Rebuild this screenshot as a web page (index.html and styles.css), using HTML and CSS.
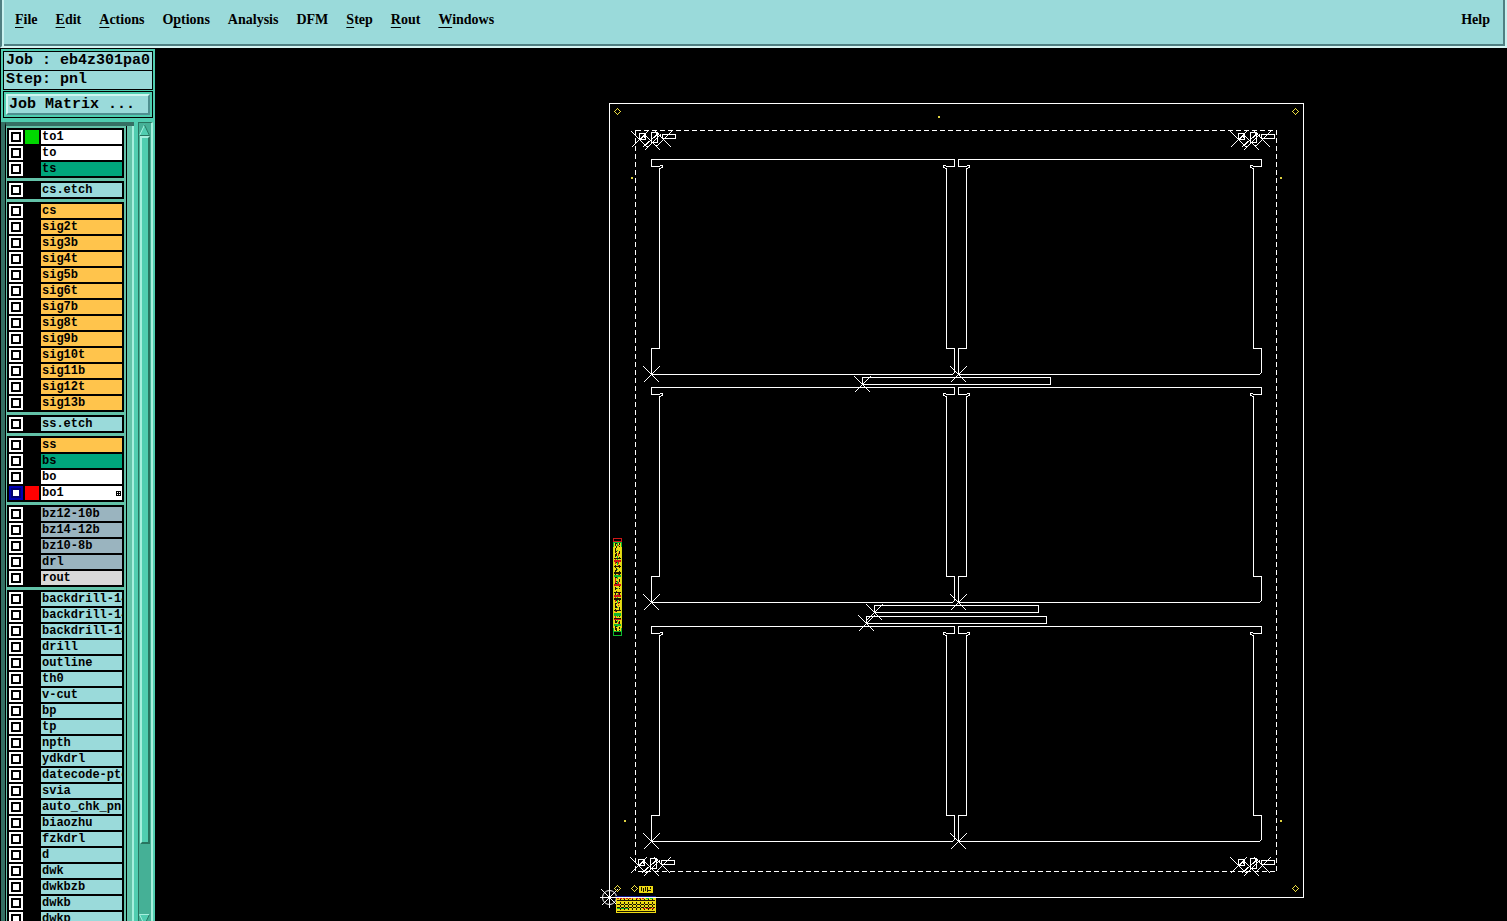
FILE: index.html
```
<!DOCTYPE html>
<html lang="en">
<head>
<meta charset="utf-8">
<title>Job eb4z301pa0</title>
<link rel="stylesheet" href="styles.css">
</head>
<body>
<header class="menubar">
  <nav class="menus">
    <button class="menu"><u>F</u>ile</button>
    <button class="menu"><u>E</u>dit</button>
    <button class="menu"><u>A</u>ctions</button>
    <button class="menu">O<u>p</u>tions</button>
    <button class="menu">Analysis</button>
    <button class="menu">DFM</button>
    <button class="menu"><u>S</u>tep</button>
    <button class="menu"><u>R</u>out</button>
    <button class="menu"><u>W</u>indows</button>
  </nav>
  <button class="menu">Help</button>
</header>
<main class="workspace">
  <aside class="sidebar">
    <div class="info">
      <div class="info-line">Job : eb4z301pa0</div>
      <div class="info-line">Step: pnl</div>
    </div>
    <div class="matrix"><button class="matrix-button">Job Matrix ...</button></div>
    <div class="browser">
      <div class="layers">
        <ul class="group">
          <li><label class="layer silk"><input type="checkbox"><i class="swatch green"></i><span class="name">to1</span></label></li>
          <li><label class="layer silk"><input type="checkbox"><i class="swatch"></i><span class="name">to</span></label></li>
          <li><label class="layer mask"><input type="checkbox"><i class="swatch"></i><span class="name">ts</span></label></li>
        </ul>
        <ul class="group">
          <li><label class="layer"><input type="checkbox"><i class="swatch"></i><span class="name">cs.etch</span></label></li>
        </ul>
        <ul class="group">
          <li><label class="layer signal"><input type="checkbox"><i class="swatch"></i><span class="name">cs</span></label></li>
          <li><label class="layer signal"><input type="checkbox"><i class="swatch"></i><span class="name">sig2t</span></label></li>
          <li><label class="layer signal"><input type="checkbox"><i class="swatch"></i><span class="name">sig3b</span></label></li>
          <li><label class="layer signal"><input type="checkbox"><i class="swatch"></i><span class="name">sig4t</span></label></li>
          <li><label class="layer signal"><input type="checkbox"><i class="swatch"></i><span class="name">sig5b</span></label></li>
          <li><label class="layer signal"><input type="checkbox"><i class="swatch"></i><span class="name">sig6t</span></label></li>
          <li><label class="layer signal"><input type="checkbox"><i class="swatch"></i><span class="name">sig7b</span></label></li>
          <li><label class="layer signal"><input type="checkbox"><i class="swatch"></i><span class="name">sig8t</span></label></li>
          <li><label class="layer signal"><input type="checkbox"><i class="swatch"></i><span class="name">sig9b</span></label></li>
          <li><label class="layer signal"><input type="checkbox"><i class="swatch"></i><span class="name">sig10t</span></label></li>
          <li><label class="layer signal"><input type="checkbox"><i class="swatch"></i><span class="name">sig11b</span></label></li>
          <li><label class="layer signal"><input type="checkbox"><i class="swatch"></i><span class="name">sig12t</span></label></li>
          <li><label class="layer signal"><input type="checkbox"><i class="swatch"></i><span class="name">sig13b</span></label></li>
        </ul>
        <ul class="group">
          <li><label class="layer"><input type="checkbox"><i class="swatch"></i><span class="name">ss.etch</span></label></li>
        </ul>
        <ul class="group">
          <li><label class="layer signal"><input type="checkbox"><i class="swatch"></i><span class="name">ss</span></label></li>
          <li><label class="layer mask"><input type="checkbox"><i class="swatch"></i><span class="name">bs</span></label></li>
          <li><label class="layer silk"><input type="checkbox"><i class="swatch"></i><span class="name">bo</span></label></li>
          <li><label class="layer silk"><input type="checkbox" checked><i class="swatch red"></i><span class="name">bo1<svg class="grid-mark" viewBox="0 0 5 5" aria-hidden="true"><path d="M0 .5H5M0 2.5H5M0 4.5H5M.5 0V5M2.5 0V5M4.5 0V5"/></svg></span></label></li>
        </ul>
        <ul class="group">
          <li><label class="layer drill"><input type="checkbox"><i class="swatch"></i><span class="name">bz12-10b</span></label></li>
          <li><label class="layer drill"><input type="checkbox"><i class="swatch"></i><span class="name">bz14-12b</span></label></li>
          <li><label class="layer drill"><input type="checkbox"><i class="swatch"></i><span class="name">bz10-8b</span></label></li>
          <li><label class="layer drill"><input type="checkbox"><i class="swatch"></i><span class="name">drl</span></label></li>
          <li><label class="layer rout"><input type="checkbox"><i class="swatch"></i><span class="name">rout</span></label></li>
        </ul>
        <ul class="group">
          <li><label class="layer"><input type="checkbox"><i class="swatch"></i><span class="name">backdrill-14</span></label></li>
          <li><label class="layer"><input type="checkbox"><i class="swatch"></i><span class="name">backdrill-14</span></label></li>
          <li><label class="layer"><input type="checkbox"><i class="swatch"></i><span class="name">backdrill-14</span></label></li>
          <li><label class="layer"><input type="checkbox"><i class="swatch"></i><span class="name">drill</span></label></li>
          <li><label class="layer"><input type="checkbox"><i class="swatch"></i><span class="name">outline</span></label></li>
          <li><label class="layer"><input type="checkbox"><i class="swatch"></i><span class="name">th0</span></label></li>
          <li><label class="layer"><input type="checkbox"><i class="swatch"></i><span class="name">v-cut</span></label></li>
          <li><label class="layer"><input type="checkbox"><i class="swatch"></i><span class="name">bp</span></label></li>
          <li><label class="layer"><input type="checkbox"><i class="swatch"></i><span class="name">tp</span></label></li>
          <li><label class="layer"><input type="checkbox"><i class="swatch"></i><span class="name">npth</span></label></li>
          <li><label class="layer"><input type="checkbox"><i class="swatch"></i><span class="name">ydkdrl</span></label></li>
          <li><label class="layer"><input type="checkbox"><i class="swatch"></i><span class="name">datecode-pto</span></label></li>
          <li><label class="layer"><input type="checkbox"><i class="swatch"></i><span class="name">svia</span></label></li>
          <li><label class="layer"><input type="checkbox"><i class="swatch"></i><span class="name">auto_chk_pnl</span></label></li>
          <li><label class="layer"><input type="checkbox"><i class="swatch"></i><span class="name">biaozhu</span></label></li>
          <li><label class="layer"><input type="checkbox"><i class="swatch"></i><span class="name">fzkdrl</span></label></li>
          <li><label class="layer"><input type="checkbox"><i class="swatch"></i><span class="name">d</span></label></li>
          <li><label class="layer"><input type="checkbox"><i class="swatch"></i><span class="name">dwk</span></label></li>
          <li><label class="layer"><input type="checkbox"><i class="swatch"></i><span class="name">dwkbzb</span></label></li>
          <li><label class="layer"><input type="checkbox"><i class="swatch"></i><span class="name">dwkb</span></label></li>
          <li><label class="layer"><input type="checkbox"><i class="swatch"></i><span class="name">dwkp</span></label></li>
        </ul>
      </div>
      <div class="scrollbar">
        <button class="arrow" aria-label="Scroll up"><svg viewBox="0 0 11 12" aria-hidden="true"><path class="face" d="M0 12L5.500 0L11 12Z"/><path class="lit" d="M.5 11.500L5.500 1"/><path class="shade" d="M5.500 1L10.500 11.500H.5"/></svg></button>
        <div class="trough"><div class="thumb"></div></div>
        <button class="arrow" aria-label="Scroll down"><svg viewBox="0 0 11 12" aria-hidden="true"><path class="face" d="M0 0H11L5.500 12Z"/><path class="lit" d="M5.500 11L.5 .5H10.500"/><path class="shade" d="M10.500 .5L5.500 11"/></svg></button>
      </div>
    </div>
  </aside>
  <svg class="board" viewBox="155 48 1352 873" role="img" aria-label="Panel drawing">
    <defs>
      <path id="cross" d="M-8 -8L8 8M-8 8L8 -8"/>
      <path id="diamond" d="M-3 0L0 -3L3 0L0 3Z"/>
      <path id="unit" d="M651 159H954V166H946L945 165H943V167L946 168V348H954V372L952 374H651V348H659V168L662 167V165H660L659 166H651Z"/>
      <g id="fiducial">
        <use href="#cross" x="639" y="139"/>
        <use href="#cross" x="652" y="142"/>
        <use href="#cross" x="663" y="139"/>
        <path d="M639 133H645V139H639ZM651 132H657V142H651ZM662 134H675V138H662ZM640 139L645 134M643 146L659 132M655 132L661 136"/>
        <path d="M646 146H648M654 145H656M658 135H660M644 135V137"/>
      </g>
    </defs>
    <g class="lines" transform="translate(.5 .5)">
      <rect x="609" y="103" width="694" height="794"/>
      <rect class="dashed" x="635" y="130" width="641" height="741"/>
      <use href="#unit"/><use href="#unit" x="307"/>
      <use href="#unit" y="228"/><use href="#unit" x="307" y="228"/>
      <use href="#unit" y="467"/><use href="#unit" x="307" y="467"/>
      <use href="#cross" x="651" y="374"/><use href="#cross" x="958" y="374"/>
      <use href="#cross" x="651" y="602"/><use href="#cross" x="958" y="602"/>
      <use href="#cross" x="651" y="841"/><use href="#cross" x="958" y="841"/>
      <rect x="862" y="377" width="188" height="7"/><use href="#cross" x="862" y="384"/>
      <rect x="874" y="605" width="164" height="7"/><use href="#cross" x="874" y="612"/>
      <rect x="866" y="616" width="180" height="7"/><use href="#cross" x="866" y="623"/>
      <use href="#fiducial"/><use href="#fiducial" x="599"/>
      <use href="#fiducial" x="-1" y="726"/><use href="#fiducial" x="599" y="726"/>
      <circle cx="609" cy="897" r="7"/><use href="#cross" x="609" y="897"/>
      <path d="M599 897H619M609 888V907"/>
    </g>
    <g class="marks" transform="translate(.5 .5)">
      <use href="#diamond" x="617" y="111"/><use href="#diamond" x="1295" y="111"/>
      <use href="#diamond" x="617" y="888"/><use href="#diamond" x="1295" y="888"/>
      <use href="#diamond" x="634" y="888"/><path d="M630 888H631M634 884V885"/>
    </g>
    <path class="dots" d="M938 116h2v2h-2zM631 177h2v2h-2zM1280 177h2v2h-2zM624 820h2v2h-2zM1280 820h2v2h-2z"/>
    <g class="coupon">
      <rect class="fill-yellow" x="614" y="542" width="7" height="89"/>
      <path class="ink-black" d="M615.500 543V631" stroke-dasharray="3 2 5 1"/>
      <path class="ink-black" d="M616.500 543V631" stroke-dasharray="1 2 2 3 1 1 3 2"/>
      <path class="ink-green" d="M617.500 543V631" stroke-dasharray="3 4 1 5 4 2"/>
      <path class="ink-red" d="M618.500 545V631" stroke-dasharray="1 7 3 6 2 1"/>
      <path class="ink-black" d="M619.500 543V631" stroke-dasharray="2 1 1 4 3 3"/>
      <path class="ink-red" d="M615.500 559V620" stroke-dasharray="5 9 1 4"/>
      <path class="ink-black wide" d="M617.500 558V628" stroke-dasharray="1 7 1 5 2 10"/>
      <path class="ink-red wide" d="M617.500 560V620" stroke-dasharray="2 22 2 9"/>
      <path class="ink-green wide" d="M617.500 575V627" stroke-dasharray="2 36 3 8"/>
      <path class="fill-black" d="M614 539H621V541H614ZM614 632H621V635H614Z"/>
      <path class="ink-red" d="M613.500 542V538.500H621.500V542M614 541.500H621"/>
      <path class="ink-green" d="M613.500 542V635.500H621.500V542M614 542.500H621M614 631.500H621"/>
      <path class="ink-yellow" d="M613.500 547V628M621.500 547V628"/>
    </g>
    <g class="coupon">
      <rect class="fill-yellow" x="639" y="886" width="14" height="7"/>
      <path class="ink-black" d="M641.500 887V891M643.500 888V892M645.500 887V891M647.500 887V892M650.500 887V889M648 890.500H651"/>
      <rect class="fill-yellow" x="616" y="898" width="40" height="15"/>
      <path class="ink-black" d="M617 900.500H655M617 904.500H655M617 907.500H655M617 911.500H655" stroke-dasharray="3 1"/>
      <path class="ink-black" d="M620.500 899V912M624.500 899V912M628.500 899V912M632.500 899V912M636.500 899V912M640.500 899V912M644.500 899V912M648.500 899V912M652.500 899V912" stroke-dasharray="2 1"/>
      <path class="ink-red" d="M617 898.500H633M643 908.500H655M636 898.500H645" stroke-dasharray="2 1"/>
      <path class="ink-green" d="M617 908.500H629M646 898.500H653" stroke-dasharray="3 1"/>
      <path class="ink-blue" d="M616 896.500H656"/>
    </g>
  </svg>
</main>
</body>
</html>
```
FILE: styles.css
```
* { box-sizing: border-box; }

body {
  margin: 0;
  height: 100vh;
  display: flex;
  flex-direction: column;
  overflow: hidden;
  background: #000;
  color: #000;
}

button {
  margin: 0;
  padding: 0;
  border: 0;
  background: none;
  color: inherit;
}

.menubar {
  flex: none;
  display: flex;
  justify-content: space-between;
  align-items: flex-start;
  padding: 10px 15px 17px 11px;
  background: #9adada;
  border-left: 2px solid #4f7f82;
  border-right: 2px solid #c9f2f0;
  border-bottom: 2px solid #d5f5f3;
  box-shadow: inset 2px 0 #c9f2f0, inset -2px -2px #4f7f82;
}
.menus { display: flex; gap: 18px; padding-left: 2px; }
.menu {
  font: bold 14px/19px "Liberation Serif", serif;
}
.menu u {
  text-underline-offset: 3px;
  text-decoration-thickness: 1px;
  text-decoration-skip-ink: none;
}

.workspace {
  flex: 1;
  min-height: 0;
  display: flex;
}

.sidebar {
  flex: none;
  width: 155px;
  display: flex;
  flex-direction: column;
  overflow: hidden;
  background: #50cdb0;
  border-left: 1px solid #000;
  border-top: 1px solid #000;
  font: bold 15px/18px "Liberation Mono", monospace;
}
.info {
  margin: 2px 2px 1px 2px;
  border: 1px solid #000;
  background: #9adada;
}
.info-line { padding-left: 2px; white-space: nowrap; }
.info-line + .info-line { border-top: 1px solid #000; }
.matrix {
  margin: 0 2px;
  padding: 2px;
  border: 1px solid #000;
  background: #50cdb0;
}
.matrix-button {
  display: block;
  width: 100%;
  padding-left: 1px;
  border: 2px solid;
  border-color: #d0f5f0 #4f8f90 #4f8f90 #d0f5f0;
  background: #9adada;
  font: inherit;
  line-height: 17px;
  text-align: left;
}

.browser {
  flex: 1;
  min-height: 0;
  display: flex;
  margin-top: 4px;
  border-left: 4px solid #357064;
}
.layers {
  width: 129px;
  overflow: hidden;
  display: flex;
  flex-direction: column;
  gap: 3px;
  padding: 2px 10px 0 1px;
  background: linear-gradient(#000 0 0) 120px 0 / 1px 100% no-repeat, linear-gradient(#a5efdd 0 0) 126px 0 / 2px 100% no-repeat, #63c2a8;
  border-top: 4px solid #357064;
  border-left: 1px solid #000;
}
.group {
  flex: none;
  margin: 0;
  padding: 2px;
  display: grid;
  grid-template-columns: minmax(0, 1fr);
  gap: 2px;
  background: #000;
  list-style: none;
}
.layer { display: flex; gap: 2px; height: 14px; }
.layer input {
  appearance: none;
  flex: none;
  width: 14px;
  height: 14px;
  margin: 0;
  border: 2px solid #fff;
  background: #fff;
  box-shadow: inset 0 0 0 2px #000;
}
.layer input:checked { border-color: #0000b4; box-shadow: inset 0 0 0 2px #000070; }
.swatch { flex: none; width: 14px; height: 14px; background: #000; }
.green { background: #00d800; }
.red { background: #f00; }
.name {
  flex: 1;
  min-width: 0;
  display: flex;
  justify-content: space-between;
  align-items: center;
  padding-left: 1px;
  overflow: hidden;
  white-space: nowrap;
  background: #9adada;
  font-size: 12px;
  line-height: 14px;
}
.silk .name { background: #fff; }
.mask .name { background: #00a67c; }
.signal .name { background: #ffc44c; }
.drill .name { background: #9ab4bf; }
.rout .name { background: #d9d9d9; }
.grid-mark {
  width: 5px;
  height: 5px;
  margin-right: 1px;
  stroke: #000;
  fill: none;
  stroke-width: 1px;
  shape-rendering: crispEdges;
}

.scrollbar {
  width: 15px;
  margin-left: 4px;
  display: flex;
  flex-direction: column;
  align-items: stretch;
  background: #45b096;
  border: 1px solid #287560;
  border-bottom: 0;
  border-right: 2px solid #a5efdd;
}
.arrow { flex: none; height: 13px; }
.arrow:last-child { height: 7px; overflow: hidden; }
.arrow svg { display: block; width: 11px; height: 12px; }
.arrow path { fill: none; }
.arrow .face { fill: #50cdb0; }
.arrow .lit { stroke: #a5efdd; }
.arrow .shade { stroke: #287560; }
.trough { flex: 1; padding: 0 1px; }
.thumb {
  height: 91%;
  background: #50cdb0;
  border: 2px solid;
  border-color: #a5efdd #287560 #287560 #a5efdd;
}

.board { flex: 1; min-width: 0; height: 100%; display: block; }
.board path, .board rect { shape-rendering: crispEdges; }
.lines { fill: none; stroke: #fff; }
.dashed { stroke-dasharray: 5 3; }
.marks { fill: none; stroke: #eedf40; }
.dots { fill: #dcd040; }
.coupon { fill: none; }
.fill-yellow { fill: #eedb14; }
.fill-black { fill: #000; }
.ink-yellow { stroke: #d8d810; }
.ink-black { stroke: #1c1600; }
.ink-red { stroke: #d01818; }
.ink-green { stroke: #10b830; }
.ink-blue { stroke: #101890; }
.wide { stroke-width: 7px; }
```
